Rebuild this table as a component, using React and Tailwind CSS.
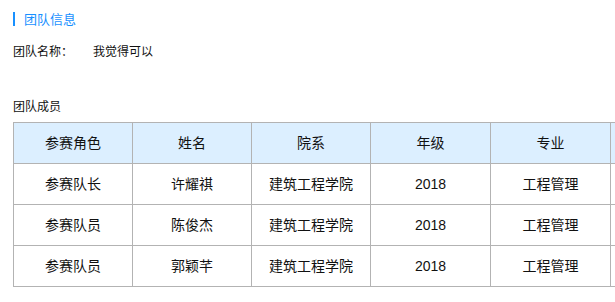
import React from 'react';

const members = [
  { role: '参赛队长', name: '许耀祺', dept: '建筑工程学院', grade: '2018', major: '工程管理' },
  { role: '参赛队员', name: '陈俊杰', dept: '建筑工程学院', grade: '2018', major: '工程管理' },
  { role: '参赛队员', name: '郭颖芊', dept: '建筑工程学院', grade: '2018', major: '工程管理' },
];

const widths = ['w-[119px]', 'w-[119px]', 'w-[119px]', 'w-[120px]', 'w-[120px]', 'w-[120px]'];
// last column runs past the window edge, so it stays empty here
const headers = ['参赛角色', '姓名', '院系', '年级', '专业', ''];

export default function App() {
  return (
    <div
      className="w-[615px] h-[302px] overflow-hidden bg-white text-[#111] pl-[13px]"
      style={{ fontFamily: '"Liberation Sans", "Noto Sans CJK SC", sans-serif' }}
    >
      <div className="flex items-center h-[14px] mt-[12px]">
        <span className="w-[2px] h-[14px] bg-[#1890ff]" />
        <span className="ml-[9px] text-[13px] leading-none text-[#1890ff]">团队信息</span>
      </div>

      <div className="flex items-center h-[14px] mt-[19px] text-[12px] leading-none">
        <span className="w-[80px]">团队名称：</span>
        <span>我觉得可以</span>
      </div>

      <div className="h-[14px] mt-[41px] text-[12px] leading-[14px]">团队成员</div>

      <table className="mt-[8px] table-fixed border-collapse text-[14px] text-[#111] w-[717px]">
        <colgroup>
          {widths.map((w, i) => (
            <col key={i} className={w} />
          ))}
        </colgroup>
        <thead>
          <tr className="h-[41px] bg-[#dcefff]">
            {headers.map((h, i) => (
              <th key={i} className="border border-[#b3b3b3] font-normal text-center p-0">
                {h}
              </th>
            ))}
          </tr>
        </thead>
        <tbody>
          {members.map((m, i) => (
            <tr key={i} className="h-[41px]">
              <td className="border border-[#b3b3b3] text-center p-0">{m.role}</td>
              <td className="border border-[#b3b3b3] text-center p-0">{m.name}</td>
              <td className="border border-[#b3b3b3] text-center p-0">{m.dept}</td>
              <td className="border border-[#b3b3b3] text-center p-0">{m.grade}</td>
              <td className="border border-[#b3b3b3] text-center p-0">{m.major}</td>
              <td className="border border-[#b3b3b3] text-center p-0"></td>
            </tr>
          ))}
        </tbody>
      </table>
    </div>
  );
}
